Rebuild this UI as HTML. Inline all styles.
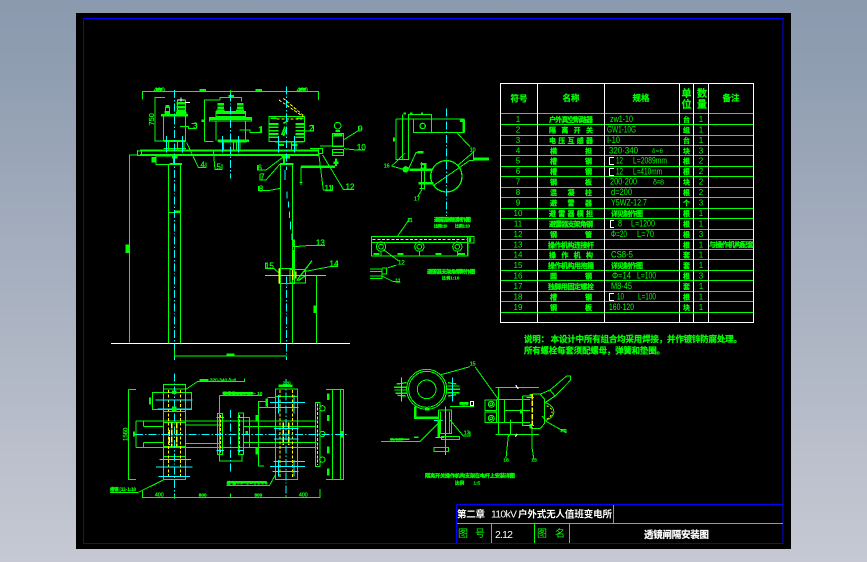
<!DOCTYPE html>
<html><head><meta charset="utf-8"><style>
html,body{margin:0;padding:0;width:867px;height:562px;overflow:hidden;background:linear-gradient(#8b9aae 0,#8f9db1 60px,#c6c9d3 562px)}
svg{position:absolute;left:0;top:0;display:block}
text{font-family:"Liberation Sans","WenQuanYi Zen Hei","Noto Sans CJK SC",sans-serif;fill:#0f0}
.c{font-family:"Noto Sans CJK SC","Liberation Sans",sans-serif;font-weight:700;font-size:7px;stroke:#0f0;stroke-width:.25px}
.m{text-anchor:middle}
.s{font-size:9px}
.n{font-size:9px;text-anchor:middle}
.t{font-size:27px;text-anchor:middle}
.g text{stroke:#0f0;stroke-width:.8px}
.g path,.g rect,.g circle,.g line{fill:none;stroke:#0f0;stroke-width:3}
.g .f{fill:#0f0}
.g .cy{stroke:#0ff;stroke-dasharray:24 6 4 6}
.g .cs{stroke:#0ff}
.g .y{stroke:#ff0;stroke-dasharray:9 5}
.g .th{stroke-width:7}
.g .w{stroke:#fff}
</style></head><body>
<svg width="867" height="562" viewBox="0 0 867 562" shape-rendering="crispEdges">
<rect x="76" y="13" width="715" height="536" fill="#000"/>
<rect x="83.500" y="18.500" width="699.500" height="525" fill="none" stroke="#00f" stroke-width="1"/>

<!-- elevation -->
<g class="g" transform="translate(100 70) scale(.33333)">
<path d="M128 88V64H655V90M391 60V70"/>
<path class="th" d="M298 61H318M466 61H486M168 58H188M598 58H618"/>
<text class="t" x="178" y="66" style="font-size:20px">400</text><text class="t" x="607" y="66" style="font-size:20px">400</text>
<path d="M195 82H165V213H190M190 140V215M257 140V215"/>
<text class="t" transform="translate(162 148) rotate(-90)" style="font-size:22px">750</text>
<path class="th" d="M183 136H264"/>
<path class="th" d="M230 100H258M230 112H258M230 122H258M228 130H260M194 127H210"/>
<path d="M232 90H256V132H232ZM197 112H208V130H197Z"/>
<path class="th" d="M196 108H208" />
<path d="M243 82V95M233 90H253M255 98H270" style="stroke:#fff"/>
<path class="th" d="M192 213H258" />
<path d="M205 215V238M232 215V238M252 215V238M190 235H258"/>
<path d="M240 170H265V176H290M275 160H290V176"/>
<path class="th" style="stroke-width:6" d="M120 241H655M120 255H655"/>
<path d="M125 238V258M655 235V258M112 243H125M112 240V256H124"/>
<path class="th" d="M222 258V280M216 262H233M208 282H246M552 262V280M545 262H570M540 282H580M352 212H447M356 214H440"/>
<path d="M205 284V820M242 284V820M205 428H242M541 284V820M578 284V820"/>
<path class="th" d="M222 425H242"/>
<path d="M168 258V283H208M168 258H215"/>
<rect class="f" x="156" y="262" width="10" height="14"/>
<path d="M88 818V255H115"/><rect class="f" x="78" y="525" width="10" height="22"/>
<!-- middle insulator -->
<path d="M313 215V90H360M313 215H340M360 90V82H425V95"/>
<path class="th" d="M305 152H313M385 78H402"/>
<path class="th" d="M352 103H372M411 103H431M352 113H372M411 113H431M350 122H374M408 122H432M350 128H436"/>
<path d="M348 125H437V140H348ZM328 143H455V153H328ZM348 153V212M437 153V212"/>
<path class="th" style="stroke-width:5" d="M330 147H453"/>
<path d="M370 214V238M400 214V238M410 214V238M420 214V238M418 180H450V188H485V168"/>
<!-- right switch -->
<path d="M507 139H613V215H507ZM535 215V238M575 215V238M588 215V238"/>
<path class="th" style="stroke-width:5" d="M505 162H535M505 172H535M505 182H535M505 192H535M505 202H535M587 162H615M587 172H615M587 182H615M587 192H615M587 202H615"/>
<path class="th" style="stroke-width:5" d="M512 145H530M590 145H610M550 160L565 152M555 170L545 195M560 175L550 198M525 215H610"/>
<path class="y" d="M537 90L610 140M550 85L612 138M530 147H606"/>
<path d="M615 183H640V166H628"/>
<path class="th" d="M535 225H552M576 225H592M366 232H372"/>
<!-- arrester -->
<circle cx="713" cy="167" r="10"/>
<path class="th" d="M706 183H720M700 196H728"/>
<path d="M697 190H730V230H697ZM697 238H731V256H697ZM697 248H731M660 228H730M630 236H668V250H655"/>
<path class="th" d="M603 290H705M708 265V288M700 278H716"/>
<path d="M603 290V345M598 338H608M730 210L775 182V168M732 236L768 240H795M655 240L670 360H697V345M668 255L730 358H762"/>
<path class="cs" d="M199 198V248M247 198V248M367 198V248M415 198V248M535 198V248M583 198V248"/>
<path class="cy" d="M223 60V870M391 70V325M559 50V300M559 620V870"/>
<path class="cs" d="M555 300V330M561 365V385M565 395V412M568 424V444M572 455V478M576 490V510"/>
<!-- leaders -->
<path d="M260 218L295 292H318V278M340 245L345 298H366V282"/>
<path d="M548 262L498 300H472V285M540 282L498 330H480V312M541 355L505 362H475V348"/>
<path d="M581 510V530L635 526H675M612 605L690 590H712V572M538 610L522 596H497V578"/>
<path d="M578 510H584V598" />
<path class="th" style="stroke-width:4" d="M581 540V600"/>
<rect x="538" y="595" width="46" height="46"/>
<rect x="570" y="599" width="46" height="40"/>
<path class="cs" d="M495 616H678"/>
<path style="stroke:#ff0;stroke-width:4" d="M578 600V630M587 605V625M538 596V640"/>
<path style="stroke-width:4" d="M590 632L636 572M615 618L595 632"/>
<path d="M649 617V820"/><rect class="f" x="642" y="708" width="7" height="20"/>
<path style="stroke:#fff" d="M33 820H750"/>
<path d="M223 840V858H559"/><path class="th" d="M380 854H404"/>
<text class="n" x="286" y="176" style="font-size:24px">3</text>
<text class="n" x="481" y="187" style="font-size:24px">1</text>
<text class="n" x="634" y="183" style="font-size:24px">2</text>
<text class="n" x="781" y="184" style="font-size:24px">9</text>
<text class="n" x="784" y="240" style="font-size:24px">10</text>
<text class="n" x="750" y="358" style="font-size:24px">12</text>
<text class="n" x="686" y="363" style="font-size:24px">11</text>
<text class="n" x="308" y="293" style="font-size:24px">4</text>
<text class="n" x="356" y="298" style="font-size:24px">5</text>
<text class="n" x="479" y="302" style="font-size:24px">6</text>
<text class="n" x="487" y="328" style="font-size:24px">7</text>
<text class="n" x="483" y="364" style="font-size:24px">8</text>
<text class="n" x="661" y="526" style="font-size:24px">13</text>
<text class="n" x="702" y="590" style="font-size:24px">14</text>
<text class="n" x="508" y="595" style="font-size:24px">15</text>
</g>

<!-- detail top mid -->
<g class="g" transform="translate(370 90) scale(.33333)">
<path d="M78 87H282V128H130V88M78 87V208H116V73H185V128M98 73V208M185 92V128"/>
<path class="th" d="M104 68V74M124 68V74M156 68V74M72 142V154M270 92H281V128"/>
<circle cx="158" cy="108" r="8" style="stroke-width:4"/>
<circle class="f" cx="107" cy="238" r="8"/>
<path class="th" d="M118 239H188M145 280H190M152 222H166V236H152"/>
<path d="M155 216V298M164 222V298M148 296H165M65 228L105 190M65 228L100 238M115 238L138 188H160"/>
<path class="th" d="M142 187H160"/>
<path d="M187 238A47 47 0 1 1 190 285A47 47 0 0 1 187 238Z" style="stroke-width:4"/>
<path d="M190 287L298 212H310V186L265 225M262 130L300 170"/>
<path class="th" style="stroke-width:9" d="M310 207H357"/>
<path d="M155 300L143 320"/>
<path class="cy" d="M229 55V378"/>
<text class="n" x="50" y="232" style="font-size:16px">16</text>
<text class="n" x="308" y="184" style="font-size:16px">10</text>
<text class="n" x="141" y="332" style="font-size:16px">17</text>
<text x="192" y="395" style="font-size:16px;font-weight:700;font-family:'Noto Sans CJK SC'" textLength="111">避雷器横担制作图</text>
<text x="192" y="413" style="font-size:12px;font-weight:700;font-family:'Noto Sans CJK SC'" textLength="40">比例1:10</text>
<text x="255" y="413" style="font-size:12px;font-weight:700;font-family:'Noto Sans CJK SC'" textLength="45">比例1:10</text>
<path d="M4 439H294V498H4ZM4 458H294M292 439V498M292 439H312V459H292M120 384L82 440"/>
<path class="y" d="M8 448H290"/>
<circle cx="33" cy="470" r="14"/><circle cx="33" cy="470" r="7"/>
<circle cx="148" cy="470" r="14"/><circle cx="148" cy="470" r="7"/>
<circle cx="262" cy="470" r="14"/><circle cx="262" cy="470" r="7"/>
<path d="M33 484V498M148 484V498M262 484V498"/>
<path class="th" d="M10 492H28M82 492H100M196 492H214M262 492H285M300 442V456"/>
<text class="n" x="120" y="396" style="font-size:16px">11</text>
<path d="M42 480L85 512M0 537H36V552H50V534H36M0 566H36V552M0 545H36M0 558H36M52 534L80 525M36 558L70 575H90"/>
<text class="n" x="94" y="524" style="font-size:18px">12</text>
<text class="n" x="84" y="578" style="font-size:16px">11</text>
<text x="171" y="551" style="font-size:16px;font-weight:700;font-family:'Noto Sans CJK SC'" textLength="145">避雷器支架角钢制作图</text>
<text x="216" y="569" style="font-size:12px;font-weight:700;font-family:'Noto Sans CJK SC'" textLength="52">比例1:10</text>
</g>

<!-- plan -->
<g class="g" transform="translate(110 365) scale(.33333)">
<path d="M55 73H78M55 73V343H78"/>
<text class="n" transform="translate(53 208) rotate(-90)" style="font-size:18px">1560</text>
<path d="M160 58H227V343H160ZM160 72H227M160 140H227M160 172H227M160 245H227M160 275H227"/>
<path d="M128 82H245V133H128Z"/>
<path class="th" d="M120 98V118"/>
<path d="M78 168H620M78 247H620M100 185H160M100 232H160M227 180H330M227 235H330M78 168V247M100 168V185M100 232V247M400 185H620M400 232H620"/>
<path class="th" d="M72 200V215"/>
<path d="M322 146H338V268H322ZM385 144H400V268H385ZM400 157H418V248H400M328 92V288H396V268M328 92H450"/>
<path class="th" d="M410 198V210M440 150V170M440 248V268"/>
<path d="M445 110H472V128H445ZM445 110V303H462M472 97H497M472 128H497"/>
<path class="th" d="M470 100V124"/>
<path d="M496 72H563V343H496ZM496 95H563M496 320H563M496 168H563M496 247H563"/>
<path class="th" d="M505 62H548"/>
<path d="M617 112H630V304H617ZM648 73H700V343H648M668 73V343M692 73V343"/>
<circle cx="637" cy="130" r="8"/><circle cx="637" cy="207" r="8"/><circle cx="637" cy="284" r="8"/>
<path class="th" d="M655 85V105M655 150V168M655 245V265M655 310V332M695 198V218"/>
<path class="y" d="M175 75V340M212 75V340M510 75V340M548 75V340"/>
<path style="stroke:#ff0;stroke-width:4;stroke-dasharray:18 3" d="M185 172V245M200 172V245M178 195V240M520 172V240M536 172V240"/>
<path style="stroke:#ff0;stroke-dasharray:9 4;stroke-width:3" d="M332 150V265M388 150V265M622 115V300"/>
<path class="cy" d="M193 25V400M361 135V325M528 42V400M75 208H715"/>
<path class="cs" d="M137 105H248M143 132H245M148 283H243M138 306H248M145 334H240M320 157H342M320 256H342M382 157H402M382 256H402M480 112H585M488 127H565M490 290H585M480 305H585M488 320H565M492 190H565M492 222H565M505 90V145M552 90V145M505 285V335M552 285V335"/>
<path class="f" d="M188 78H198V86H188Z"/><path class="f" d="M188 126H198V136H188Z"/>
<path d="M225 75L262 50H403V40"/>
<path class="th" d="M268 45H295M338 85H430M352 352H470"/>
<path d="M336 92H456"/>
<text x="300" y="50" style="font-size:14px">320·340 δ=6</text>
<text x="339" y="90" style="font-size:12px;font-weight:700;font-family:'Noto Sans CJK SC'" textLength="118">避雷器Φ14-16·10</text>
<text x="350" y="358" style="font-size:12px;font-weight:700;font-family:'Noto Sans CJK SC'" textLength="122">槽钢[8 L=1200</text>
<path d="M350 362H478L496 330"/>
<path d="M160 345L85 382H0"/>
<text x="0" y="378" style="font-size:13px;font-weight:700;font-family:'Noto Sans CJK SC'" textLength="78">槽钢 [12-1:10</text>
<path d="M98 378V398H630V372M193 390V398M361 385V398M528 390V398"/>
<text class="n" x="148" y="394" style="font-size:16px">400</text>
<text class="n" x="278" y="394" style="font-size:14px;font-weight:700">800</text>
<text class="n" x="445" y="394" style="font-size:14px;font-weight:700">800</text>
<text class="n" x="580" y="394" style="font-size:16px">400</text>
<text class="n" x="530" y="58" style="font-size:14px">220</text>
</g>

<!-- lower detail -->
<g class="g" transform="translate(370 360) scale(.33333)">
<circle cx="170" cy="88" r="60"/><circle cx="170" cy="88" r="54"/><circle cx="170" cy="88" r="28"/>
<path class="th" style="stroke-width:4" d="M72 82H110M74 90H110M76 100H110M232 78H268M230 88H270M232 98H268M80 72L110 68M82 106L108 108M234 68L260 72M234 108L258 104"/>
<path class="cs" d="M95 52V125M248 52V125M192 181H218M196 233H222M226 140V285"/>
<path d="M136 138V175H205V150M205 150H245V220H205M212 155V220M238 155V220M215 230H268V238H215ZM192 262H235V274H192ZM226 240V262"/>
<path class="th" d="M132 173H205M206 178V232M165 148H178M136 140V170M268 130H295"/>
<path d="M33 244H150L205 190M240 140H310V132M240 180L280 228H300V215"/>
<path style="stroke:#fff" d="M301 125H311V136H301Z"/>
<path class="th" style="stroke-width:4" d="M60 238H118M132 232H146"/>
<path d="M210 45L300 20M315 20L385 118V82"/>
<text class="n" x="308" y="17" style="font-size:16px">15</text>
<text x="60" y="241" style="font-size:11px">dia 1:10</text>
<text x="268" y="136" style="font-size:13px;font-weight:700;font-family:'Noto Sans CJK SC'">M20</text>
<text class="n" x="290" y="224" style="font-size:16px">13</text>
<path d="M376 82H507M376 223H507M385 82V223M345 120H380V152H345ZM345 156H380V188H345ZM380 118H480M380 188H480"/>
<circle cx="364" cy="133" r="9"/><circle cx="364" cy="175" r="9"/>
<circle cx="364" cy="133" r="4"/><circle cx="364" cy="175" r="4"/>
<path d="M403 118V188M403 152H480M458 108V196H488M458 108H488M488 102H510L524 118V190L510 206H488M526 128C560 140 560 170 526 182M516 168L530 185L588 218V208H570"/>
<path d="M510 103L540 90L555 108L525 128M540 90L590 48H602V60L555 108"/>
<path class="th" d="M453 148V160M482 102V108M482 192V206"/>
<path style="stroke:#ff0;stroke-width:4;stroke-dasharray:16 4" d="M487 102V206"/>
<path style="stroke:#ff0;stroke-dasharray:6 6" d="M530 138C552 145 552 165 530 178"/>
<path d="M422 178V222L415 228L408 295M486 206V262L492 300" />
<path style="stroke:#fff;stroke-width:4" d="M437 76L445 86M442 222L436 230"/>
<path class="cs" d="M470 112H492M470 197H492"/>
<text class="n" x="408" y="305" style="font-size:15px">18</text>
<text class="n" x="492" y="305" style="font-size:15px">13</text>
<text class="n" x="578" y="216" style="font-size:15px">14</text>
<text x="165" y="352" style="font-size:16px;font-weight:700;font-family:'Noto Sans CJK SC'" textLength="270">隔离开关操作机构支架在电杆上安装详图</text>
<text x="255" y="373" style="font-size:14px;font-weight:700;font-family:'Noto Sans CJK SC'">比例</text>
<text x="310" y="373" style="font-size:15px">1:5</text>
</g>

<!-- table -->
<g fill="none" stroke="#0f0" stroke-width="1">
<path d="M501 113.500H753M501 124.500H753M501 135.500H753M501 145.500H753M501 155.500H753M501 166.500H753M501 176.500H753M501 187.500H753M501 197.500H753M501 208.500H753M501 218.500H753M501 229.500H753M501 239.500H753M501 249.500H753M501 259.500H753M501 270.500H753M501 280.500H753M501 291.500H753M501 301.500H753M501 312.500H753"/>
</g>
<g fill="none" stroke="#fff" stroke-width="1">
<rect x="500.500" y="83.500" width="253" height="239"/>
<path d="M537.500 84V322M604.500 84V322M679.500 84V322M693.500 84V322M708.500 84V322"/>
<path d="M614 157.500H609.500V164.500H614M614 168.500H609.500V175.500H614M614 220.500H610.500V227.500H614M614 293.500H609.500V300.500H614"/>
</g>
<g>
<text class="c m" x="519" y="101.500" style="font-size:8.500px">符号</text>
<text class="c m" x="571" y="101" style="font-size:8.500px">名称</text>
<text class="c m" x="641" y="101" style="font-size:8.500px">规格</text>
<text class="c m" x="686.500" y="97" style="font-size:10px">单</text><text class="c m" x="686.500" y="108" style="font-size:10px">位</text>
<text class="c m" x="702" y="97" style="font-size:10px">数</text><text class="c m" x="702" y="108" style="font-size:10px">量</text>
<text class="c m" x="731" y="101" style="font-size:8.500px">备注</text>

<g class="nums" style="font-size:8px;text-anchor:middle">
<text x="518" y="122">1</text><text x="518" y="132.500">2</text><text x="518" y="143">3</text><text x="518" y="153.500">4</text><text x="518" y="163.500">5</text><text x="518" y="174">6</text><text x="518" y="184.500">7</text><text x="518" y="195">8</text><text x="518" y="205.500">9</text><text x="518" y="216">10</text><text x="518" y="226.500">11</text><text x="518" y="237">12</text><text x="518" y="247.500">13</text><text x="518" y="257.500">14</text><text x="518" y="268">15</text><text x="518" y="278.500">16</text><text x="518" y="289">17</text><text x="518" y="299.500">18</text><text x="518" y="310">19</text>
</g>

<text class="c" x="549" y="122" textLength="44">户外真空断路器</text>
<text class="c" x="549" y="132.500" textLength="44">隔 离 开 关</text>
<text class="c" x="549" y="143" textLength="44">电 压 互 感 器</text>
<text class="c" x="550" y="153.500" textLength="42">横 担</text>
<text class="c" x="550" y="163.500" textLength="42">槽 钢</text>
<text class="c" x="550" y="174" textLength="42">槽 钢</text>
<text class="c" x="550" y="184.500" textLength="42">钢 板</text>
<text class="c" x="550" y="195" textLength="42">混 凝 柱</text>
<text class="c" x="550" y="205.500" textLength="42">避 雷 器</text>
<text class="c" x="549" y="216" textLength="44">避 雷 器 横 担</text>
<text class="c" x="549" y="226.500" textLength="44">避雷器支架角钢</text>
<text class="c" x="550" y="237" textLength="42">钢 管</text>
<text class="c" x="548" y="247.500" textLength="46">操作机构连接杆</text>
<text class="c" x="549" y="257.500" textLength="44">操 作 机 构</text>
<text class="c" x="548" y="268" textLength="46">操作机构用抱箍</text>
<text class="c" x="550" y="278.500" textLength="42">圆 钢</text>
<text class="c" x="548" y="289" textLength="46">独脚用固定螺栓</text>
<text class="c" x="550" y="299.500" textLength="42">槽 钢</text>
<text class="c" x="550" y="310" textLength="42">钢 板</text>

<g lengthAdjust="spacingAndGlyphs">
<text class="s" x="610" y="122" textLength="23" lengthAdjust="spacingAndGlyphs">zw1-10</text>
<text class="s" x="607" y="132.500" textLength="29" lengthAdjust="spacingAndGlyphs">GW1-10G</text>
<text class="s" x="607" y="143" textLength="13" lengthAdjust="spacingAndGlyphs">I-10</text>
<text class="s" x="609" y="153.500" textLength="29" lengthAdjust="spacingAndGlyphs">320·340</text><text x="652" y="153" style="font-size:6px" textLength="11">δ=6</text>
<text class="s" x="616" y="163.500" textLength="7" lengthAdjust="spacingAndGlyphs">12</text><text class="s" x="633" y="163.500" textLength="34" lengthAdjust="spacingAndGlyphs">L=2089mm</text>
<text class="s" x="616" y="174.500" textLength="7" lengthAdjust="spacingAndGlyphs">12</text><text class="s" x="633" y="174.500" textLength="29" lengthAdjust="spacingAndGlyphs">L=410mm</text>
<text class="s" x="610" y="184.500" textLength="27" lengthAdjust="spacingAndGlyphs">200·200</text><text x="653" y="184.500" style="font-size:7px" textLength="11">δ=8</text>
<text class="s" x="611" y="195" textLength="21" lengthAdjust="spacingAndGlyphs">d=200</text>
<text class="s" x="611" y="205.500" textLength="36" lengthAdjust="spacingAndGlyphs">Y5WZ-12.7</text>
<text class="c" x="611" y="216" textLength="32">详见制作图</text>
<text class="s" x="618" y="226.500" textLength="4" lengthAdjust="spacingAndGlyphs">8</text><text class="s" x="631" y="226.500" textLength="24" lengthAdjust="spacingAndGlyphs">L=1200</text>
<text class="s" x="611" y="237" textLength="16" lengthAdjust="spacingAndGlyphs">Φ=20</text><text class="s" x="637" y="237" textLength="17" lengthAdjust="spacingAndGlyphs">L=70</text>
<text class="s" x="611" y="257.500" textLength="22" lengthAdjust="spacingAndGlyphs">CS8-5</text>
<text class="c" x="611" y="268" textLength="32">详见制作图</text>
<text class="s" x="612" y="278.500" textLength="19" lengthAdjust="spacingAndGlyphs">Φ=14</text><text class="s" x="637" y="278.500" textLength="19" lengthAdjust="spacingAndGlyphs">L=100</text>
<text class="s" x="611" y="289" textLength="21" lengthAdjust="spacingAndGlyphs">M8·45</text>
<text class="s" x="617" y="299.500" textLength="7" lengthAdjust="spacingAndGlyphs">10</text><text class="s" x="638" y="299.500" textLength="18" lengthAdjust="spacingAndGlyphs">L=100</text>
<text class="s" x="609" y="310" textLength="25" lengthAdjust="spacingAndGlyphs">160·120</text>
</g>

<text class="c m" x="686.500" y="122">台</text><text class="c m" x="686.500" y="132.500">组</text><text class="c m" x="686.500" y="143">台</text><text class="c m" x="686.500" y="153.500">块</text><text class="c m" x="686.500" y="163.500">根</text><text class="c m" x="686.500" y="174">根</text><text class="c m" x="686.500" y="184.500">块</text><text class="c m" x="686.500" y="195">根</text><text class="c m" x="686.500" y="205.500">个</text><text class="c m" x="686.500" y="216">根</text><text class="c m" x="686.500" y="226.500">根</text><text class="c m" x="686.500" y="237">根</text><text class="c m" x="686.500" y="247.500">根</text><text class="c m" x="686.500" y="257.500">套</text><text class="c m" x="686.500" y="268">套</text><text class="c m" x="686.500" y="278.500">根</text><text class="c m" x="686.500" y="289">套</text><text class="c m" x="686.500" y="299.500">根</text><text class="c m" x="686.500" y="310">块</text>

<g style="font-size:8px;text-anchor:middle">
<text x="701" y="122">1</text><text x="701" y="132.500">1</text><text x="701" y="143">1</text><text x="701" y="153.500">3</text><text x="701" y="163.500">2</text><text x="701" y="174">2</text><text x="701" y="184.500">2</text><text x="701" y="195">2</text><text x="701" y="205.500">3</text><text x="701" y="216">1</text><text x="701" y="226.500">1</text><text x="701" y="237">3</text><text x="701" y="247.500">1</text><text x="701" y="257.500">1</text><text x="701" y="268">1</text><text x="701" y="278.500">3</text><text x="701" y="289">1</text><text x="701" y="299.500">1</text><text x="701" y="310">1</text>
</g>
<text class="c" x="709" y="247" textLength="45">与操作机构配套</text>

<text class="c" x="524" y="342" style="font-size:8.500px" textLength="218">说明： 本设计中所有组合均采用焊接，并作镀锌防腐处理。</text>
<text class="c" x="524" y="353.500" style="font-size:8.500px" textLength="141">所有螺栓每套须配螺母，弹簧和垫圈。</text>
</g>

<!-- title block -->
<g fill="none" stroke-width="1">
<path stroke="#00f" d="M456.500 504.500H783M456.500 504.500V543.500H783"/>
<path stroke="#0f0" d="M457 523.500H783M613.500 505V523M491.500 524V543M534.500 524V543M569.500 524V543"/>
</g>
<text x="457" y="517.500" style="fill:#fff;font-size:9.500px;font-weight:700;font-family:'Noto Sans CJK SC'" textLength="28">第二章</text>
<text x="491" y="517.500" style="fill:#fff;font-size:10.500px" textLength="26">110kV</text>
<text x="518" y="517.500" style="fill:#fff;font-size:9.500px;font-family:'Noto Sans CJK SC';font-weight:700" textLength="94">户外式无人值班变电所</text>
<text x="458" y="537" style="font-size:10px;font-family:'Noto Sans CJK SC'">图</text>
<text x="475" y="537" style="font-size:10px;font-family:'Noto Sans CJK SC'">号</text>
<text x="495" y="538" style="fill:#fff;font-size:10.500px" textLength="18">2.12</text>
<text x="537" y="537" style="font-size:10px;font-family:'Noto Sans CJK SC'">图</text>
<text x="555" y="537" style="font-size:10px;font-family:'Noto Sans CJK SC'">名</text>
<text x="644" y="538" style="fill:#fff;stroke:#fff;stroke-width:.2px;font-size:9.500px;font-weight:700;font-family:'Noto Sans CJK SC'" textLength="65">透镜闸隔安装图</text>
</svg>
</body></html>
